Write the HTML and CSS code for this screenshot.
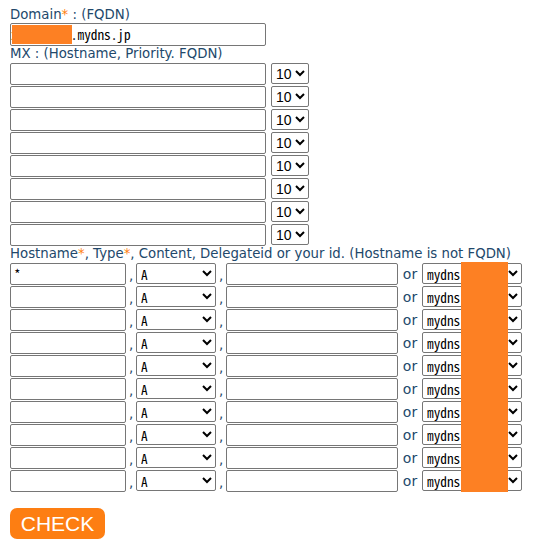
FILE: index.html
```html
<!DOCTYPE html>
<html>
<head>
<meta charset="utf-8">
<link rel="stylesheet" href="styles.css">
</head>
<body>
<form class="form">
  <div class="label">Domain<span class="req">*</span> : (FQDN)</div>
  <div class="row domain-row">
    <input class="txt wide domain" type="text" value="xxxxxxxxx.mydns.jp">
    <span class="mask mask-domain"></span>
  </div>
  <div class="label">MX : (Hostname, Priority. FQDN)</div>
  <div class="mx">
    <div class="row"><input class="txt wide" type="text"><select class="sel pri"><option>10</option></select></div>
    <div class="row"><input class="txt wide" type="text"><select class="sel pri"><option>10</option></select></div>
    <div class="row"><input class="txt wide" type="text"><select class="sel pri"><option>10</option></select></div>
    <div class="row"><input class="txt wide" type="text"><select class="sel pri"><option>10</option></select></div>
    <div class="row"><input class="txt wide" type="text"><select class="sel pri"><option>10</option></select></div>
    <div class="row"><input class="txt wide" type="text"><select class="sel pri"><option>10</option></select></div>
    <div class="row"><input class="txt wide" type="text"><select class="sel pri"><option>10</option></select></div>
    <div class="row"><input class="txt wide" type="text"><select class="sel pri"><option>10</option></select></div>
  </div>
  <div class="label">Hostname<span class="req">*</span>, Type<span class="req">*</span>, Content, Delegateid or your id. (Hostname is not FQDN)</div>
  <div class="hosts">
    <div class="row"><input class="txt host" type="text" value="*"><span class="sep">,</span><select class="sel type"><option>A</option></select><span class="sep">,</span><input class="txt content" type="text"><span class="or">or</span><select class="sel id"><option>mydns</option></select></div>
    <div class="row"><input class="txt host" type="text"><span class="sep">,</span><select class="sel type"><option>A</option></select><span class="sep">,</span><input class="txt content" type="text"><span class="or">or</span><select class="sel id"><option>mydns</option></select></div>
    <div class="row"><input class="txt host" type="text"><span class="sep">,</span><select class="sel type"><option>A</option></select><span class="sep">,</span><input class="txt content" type="text"><span class="or">or</span><select class="sel id"><option>mydns</option></select></div>
    <div class="row"><input class="txt host" type="text"><span class="sep">,</span><select class="sel type"><option>A</option></select><span class="sep">,</span><input class="txt content" type="text"><span class="or">or</span><select class="sel id"><option>mydns</option></select></div>
    <div class="row"><input class="txt host" type="text"><span class="sep">,</span><select class="sel type"><option>A</option></select><span class="sep">,</span><input class="txt content" type="text"><span class="or">or</span><select class="sel id"><option>mydns</option></select></div>
    <div class="row"><input class="txt host" type="text"><span class="sep">,</span><select class="sel type"><option>A</option></select><span class="sep">,</span><input class="txt content" type="text"><span class="or">or</span><select class="sel id"><option>mydns</option></select></div>
    <div class="row"><input class="txt host" type="text"><span class="sep">,</span><select class="sel type"><option>A</option></select><span class="sep">,</span><input class="txt content" type="text"><span class="or">or</span><select class="sel id"><option>mydns</option></select></div>
    <div class="row"><input class="txt host" type="text"><span class="sep">,</span><select class="sel type"><option>A</option></select><span class="sep">,</span><input class="txt content" type="text"><span class="or">or</span><select class="sel id"><option>mydns</option></select></div>
    <div class="row"><input class="txt host" type="text"><span class="sep">,</span><select class="sel type"><option>A</option></select><span class="sep">,</span><input class="txt content" type="text"><span class="or">or</span><select class="sel id"><option>mydns</option></select></div>
    <div class="row"><input class="txt host" type="text"><span class="sep">,</span><select class="sel type"><option>A</option></select><span class="sep">,</span><input class="txt content" type="text"><span class="or">or</span><select class="sel id"><option>mydns</option></select></div>
    <span class="mask mask-ids"></span>
  </div>
  <div class="actions">
    <button class="check" type="button">CHECK</button>
  </div>
</form>
</body>
</html>
```
FILE: styles.css
```css
html, body {
  margin: 0;
  padding: 0;
  background: #ffffff;
}
.form {
  display: flex;
  flex-direction: column;
  padding: 7px 10px 0 10px;
  font-family: "DejaVu Sans", Verdana, sans-serif;
  font-size: 13.3px;
  color: #22486b;
}
.label {
  height: 16px;
  line-height: 16px;
  white-space: nowrap;
}
.req {
  color: #ff7f0f;
}
.row {
  display: flex;
  align-items: center;
  height: 23px;
  position: relative;
}
.mx, .hosts {
  display: flex;
  flex-direction: column;
}
.hosts {
  position: relative;
}
.txt {
  box-sizing: border-box;
  height: 22px;
  margin: 0;
  padding: 1px 3px;
  border: 1px solid #767676;
  border-radius: 2px;
  font-family: "Noto Sans Mono CJK JP", "DejaVu Sans Mono", monospace;
  font-size: 13.3px;
  color: #000;
  background: #fff;
}
.wide {
  width: 256px;
}
.domain-row .txt {
  height: 23px;
}
.domain {
  padding-left: 0;
}
.host {
  width: 116px;
}
.content {
  width: 172px;
}
.sel {
  box-sizing: border-box;
  height: 21px;
  margin: 0;
  border: 1px solid #767676;
  border-radius: 2px;
  background: #fff;
  color: #000;
  font-size: 13.3px;
}
.pri {
  width: 38px;
  margin-left: 5px;
  font-family: "Liberation Sans", Arial, sans-serif;
  font-size: 14px;
}
.type {
  width: 80px;
  font-family: "Noto Sans Mono CJK JP", "DejaVu Sans Mono", monospace;
}
.id {
  width: 100px;
  font-family: "Noto Sans Mono CJK JP", "DejaVu Sans Mono", monospace;
}
.sep {
  width: 10px;
  text-align: center;
  align-self: flex-end;
  line-height: 18px;
}
.or {
  width: 24px;
  text-align: center;
  font-size: 14px;
}
.mask {
  position: absolute;
  background: #fd8023;
}
.mask-domain {
  left: 2px;
  top: 2px;
  width: 60px;
  height: 19px;
}
.mask-ids {
  left: 451px;
  top: 0;
  width: 47px;
  height: 230px;
}
.actions {
  padding-top: 16px;
}
.check {
  width: 95px;
  height: 31px;
  padding: 0;
  border: none;
  border-radius: 7px;
  background: #fd7e12;
  color: #fff;
  font-family: "Liberation Sans", Arial, sans-serif;
  font-size: 21px;
  cursor: pointer;
}
```
